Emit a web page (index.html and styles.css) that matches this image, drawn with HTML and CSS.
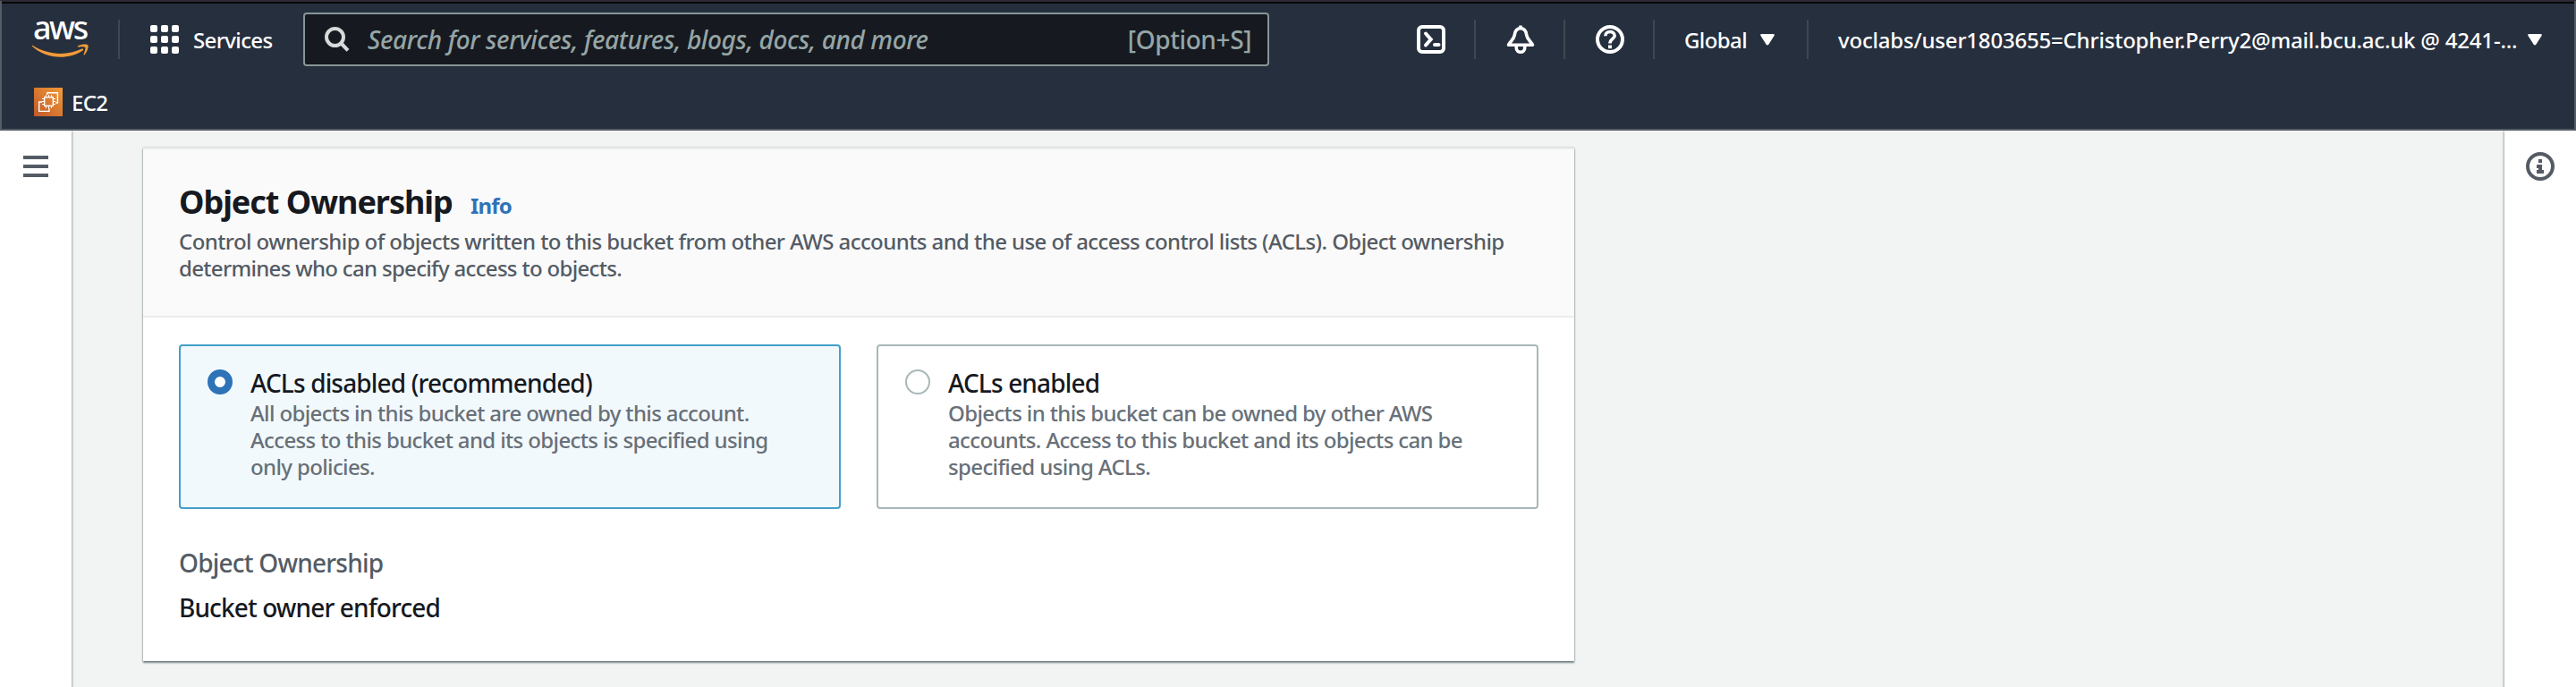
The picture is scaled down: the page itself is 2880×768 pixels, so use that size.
FILE: index.html
```html
<!DOCTYPE html>
<html lang="en">
<head>
<meta charset="utf-8">
<title>S3 bucket - Object Ownership</title>
<link rel="stylesheet" href="styles.css">
</head>
<body>
<header class="header">
  <div class="nav">
    <div class="logo">
      <span class="logo-text">aws</span>
      <svg width="64" height="16" viewBox="0 26 64 16">
        <path d="M0 27.500C18 39 39 39.500 55.500 31.500C57 31 58 32.500 56.500 33.500C40 44.500 15 43 0 28.800Z" fill="#f19b38"/>
        <path d="M51 28.500C55 26.200 61 26 62.300 27.300C63.500 29 61.500 35.500 58.500 38.300C57.800 38.800 57.200 38.500 57.500 37.700C58.500 35 60 31 59.300 30C58.300 29 54.500 29.200 51.800 29.700C50.800 29.700 50.500 29 51 28.500Z" fill="#f19b38"/>
      </svg>
    </div>
    <span class="divider"></span>
    <svg class="grid-icon" width="32" height="32" viewBox="0 0 32 32" fill="#fff">
      <rect width="8" height="8" rx="2"/><rect x="12" width="8" height="8" rx="2"/><rect x="24" width="8" height="8" rx="2"/>
      <rect y="12" width="8" height="8" rx="2"/><rect x="12" y="12" width="8" height="8" rx="2"/><rect x="24" y="12" width="8" height="8" rx="2"/>
      <rect y="24" width="8" height="8" rx="2"/><rect x="12" y="24" width="8" height="8" rx="2"/><rect x="24" y="24" width="8" height="8" rx="2"/>
    </svg>
    <span class="services">Services</span>
    <div class="search">
      <svg width="28" height="28" viewBox="0 0 28 28" fill="none" stroke="#d5dbdb" stroke-width="4">
        <circle cx="11.500" cy="11.500" r="9.500"/><path d="M18 18l8 8.300"/>
      </svg>
      <span class="placeholder">Search for services, features, blogs, docs, and more</span>
      <span class="shortcut">[Option+S]</span>
    </div>
    <div class="tools">
      <svg width="32" height="32" viewBox="0 0 32 32" fill="none" stroke="#fff" stroke-width="4">
        <rect x="2" y="2" width="28" height="28" rx="4"/>
        <path d="M10 9.500l5.700 6.500L10 22.500" stroke-linecap="round"/><path d="M20 22h4.500" stroke-linecap="round"/>
      </svg>
      <span class="divider"></span>
      <svg width="32" height="32" viewBox="0 0 32 32" fill="none" stroke="#fff" stroke-width="3.600" stroke-linejoin="round">
        <path d="M16 .5v3"/>
        <path d="M16 3.800C11.500 3.800 9.800 7 9.300 11C8.800 16 5 17.500 2.500 22.200H29.500C27 17.500 23.200 16 22.700 11C22.200 7 20.500 3.800 16 3.800Z"/>
        <path d="M11.300 23.500v2.200c0 6 9.400 6 9.400 0v-2.200"/>
      </svg>
      <span class="divider"></span>
      <svg width="32" height="32" viewBox="0 0 32 32" fill="none" stroke="#fff">
        <circle cx="16" cy="16" r="14" stroke-width="4"/>
        <path d="M10.800 12.200C10.800 6 21.200 6 21.200 12C21.200 15.500 16 15.500 16 20.500" stroke-width="3.600"/>
        <path d="M16 22.500v3.700" stroke-width="4"/>
      </svg>
      <span class="divider"></span>
    </div>
    <span class="region">Global</span>
    <svg class="caret" width="16" height="13" viewBox="0 0 16 13"><path d="M1.500 0H14.500Q16.500 0 15.500 2L9.500 11.500Q8 13.500 6.500 11.500L.5 2Q-.5 0 1.500 0Z" fill="#fff"/></svg>
    <span class="divider"></span>
    <span class="account">voclabs/user1803655=Christopher.Perry2@mail.bcu.ac.uk @ 4241-...</span>
    <svg class="caret" width="16" height="13" viewBox="0 0 16 13"><path d="M1.500 0H14.500Q16.500 0 15.500 2L9.500 11.500Q8 13.500 6.500 11.500L.5 2Q-.5 0 1.500 0Z" fill="#fff"/></svg>
  </div>
  <div class="favorites">
    <svg width="32" height="32" viewBox="0 0 32 32" fill="none" stroke="#fff">
      <defs><linearGradient id="ec2" x1="0" y1="1" x2="1" y2="0"><stop offset="0" stop-color="#c1592b"/><stop offset="1" stop-color="#f19b38"/></linearGradient></defs>
      <rect width="32" height="32" fill="url(#ec2)" stroke="none"/>
      <rect x="11.700" y="10.700" width="9.600" height="9.600" stroke-width="1.400"/>
      <path d="M13.500 8v2.500M16.500 8v2.500M19.500 8v2.500M13.500 20.500v2.500M16.500 20.500v2.500M19.500 20.500v2.500M9 12.500h2.500M9 15.500h2.500M9 18.500h2.500M21.500 12.500h2.500M21.500 15.500h2.500M21.500 18.500h2.500" stroke-width="1.100"/>
      <path d="M14.800 8V5.800H26.400V17H24.200M9 16H5.700V26.400H17V23" stroke-width="1.400"/>
    </svg>
    <span class="favorite">EC2</span>
  </div>
</header>
<div class="page">
  <aside class="side-left">
    <svg width="28" height="24" viewBox="0 0 28 24" fill="#545b64"><rect width="28" height="4"/><rect y="10" width="28" height="4"/><rect y="20" width="28" height="4"/></svg>
  </aside>
  <main class="main">
    <section class="panel">
      <div class="panel-head">
        <div class="title-row"><h2 class="title">Object Ownership</h2><a class="info">Info</a></div>
        <p class="summary">Control ownership of objects written to this bucket from other AWS accounts and the use of access control lists (ACLs). Object ownership<br><span class="summary-end">determines who can specify access to objects.</span></p>
      </div>
      <div class="panel-body">
        <div class="tiles">
          <div class="tile tile-selected">
            <span class="radio radio-checked"></span>
            <div>
              <div class="tile-title">ACLs disabled (recommended)</div>
              <p class="tile-text">All objects in this bucket are owned by this account.<br>Access to this bucket and its objects is specified using<br>only policies.</p>
            </div>
          </div>
          <div class="tile">
            <span class="radio"></span>
            <div>
              <div class="tile-title">ACLs enabled</div>
              <p class="tile-text">Objects in this bucket can be owned by other AWS<br>accounts. Access to this bucket and its objects can be<br>specified using ACLs.</p>
            </div>
          </div>
        </div>
        <div class="field-label">Object Ownership</div>
        <div class="field-value">Bucket owner enforced</div>
      </div>
    </section>
  </main>
  <aside class="side-right">
    <svg width="32" height="32" viewBox="0 0 32 32"><circle cx="16" cy="16" r="14" fill="none" stroke="#545b64" stroke-width="4"/><path d="M14 8h4v4h-4zM12 14h6v6h2v4h-8v-4h2v-2h-2z" fill="#545b64"/></svg>
  </aside>
</div>
</body>
</html>
```
FILE: styles.css
```css
* { box-sizing: border-box; }
body {
  margin: 0;
  width: 2880px;
  height: 768px;
  display: flex;
  flex-direction: column;
  overflow: hidden;
  background: #f2f3f3;
  font-family: "Noto Sans", "Open Sans", sans-serif;
  font-size: 24px;
  font-weight: 500;
  color: #16191f;
}
h2, p { margin: 0; }
svg { display: block; flex: none; }

.header {
  height: 146px;
  flex: none;
  background: #262f3e;
  border: 2px solid #545b64;
  border-top: 2px solid #2d2a35;
  color: #fff;
  box-shadow: inset 0 2px #07080a;
}
.nav {
  display: flex;
  align-items: center;
  height: 82px;
  padding: 2px 0 0 34px;
  white-space: nowrap;
}
.logo { width: 64px; height: 60px; display: flex; flex-direction: column; margin-top: -14px; }
.logo-text { height: 42px; padding-left: 1px; font-size: 36px; line-height: 47px; letter-spacing: -2.500px; }
.divider { width: 2px; height: 44px; background: #414750; flex: none; }
.nav > .logo + .divider { margin-left: 32px; }
.grid-icon { margin-left: 34px; }
.services { width: 88px; margin-left: 16px; letter-spacing: -.62px; }
.search {
  width: 1080px;
  height: 60px;
  margin-left: 35px;
  padding: 0 18px 0 22px;
  display: flex;
  align-items: center;
  flex: none;
  background: #16191f;
  border: 2px solid #879596;
  border-radius: 4px;
  color: #95a5a6;
  font-size: 28px;
}
.placeholder { margin-left: 20px; font-style: italic; letter-spacing: -.38px; }
.shortcut { margin-left: auto; letter-spacing: -.4px; }
.tools { display: flex; align-items: center; margin-left: 165px; }
.tools .divider { margin: 0 34px 0 32px; }
.region { width: 72px; letter-spacing: -.6px; }
.tools + .region { margin-left: -1px; }
.caret { margin: 0 0 0 13px; }
.caret + .divider { margin-left: 36px; }
.account { width: 758px; margin-left: 33px; letter-spacing: -.2px; }
.favorites { display: flex; align-items: center; gap: 10px; height: 60px; padding-left: 36px; letter-spacing: -.7px; }

.page { flex: 1; display: flex; justify-content: space-between; min-height: 0; }
.side-left, .side-right { width: 80px; background: #fff; flex: none; }
.side-left { padding: 28px 0 0 26px; box-shadow: 1px 1px 2px rgba(0, 28, 36, .35); }
.side-right { padding: 24px 0 0 24px; box-shadow: -1px 1px 2px rgba(0, 28, 36, .35); }
.main { flex: 1; padding: 19px 80px 0; }

.panel {
  width: 1600px;
  height: 574px;
  background: #fff;
  border-top: 2px solid #eaeded;
  box-shadow: 0 2px 2px rgba(0, 28, 36, .5), 0 0 2px rgba(0, 28, 36, .3);
}
.panel-head {
  height: 188px;
  padding: 36px 40px 0;
  background: #fafafa;
  border-bottom: 2px solid #eaeded;
}
.title-row { display: flex; align-items: baseline; height: 52px; line-height: 46px; white-space: nowrap; }
.title { width: 307px; font-size: 36px; font-weight: 700; letter-spacing: -1.030px; }
.info { margin-left: 19px; font-weight: 700; letter-spacing: -.8px; color: #2e73b8; }
.summary { line-height: 30px; letter-spacing: -.58px; color: #545b64; white-space: nowrap; }
.summary-end { letter-spacing: -.68px; }

.panel-body { padding: 30px 40px 0; }
.tiles { display: grid; grid-template-columns: 1fr 1fr; gap: 40px; }
.tile {
  display: flex;
  gap: 20px;
  height: 184px;
  padding: 23px 30px;
  border: 2px solid #aab7b8;
  border-radius: 4px;
}
.tile-selected { background: #f2f9fd; border-color: #44a0c8; }
.radio { width: 28px; height: 28px; margin-top: 3px; flex: none; border: 2px solid #aab7b8; border-radius: 50%; background: #fff; }
.radio-checked { border: 8px solid #2e73b8; }
.tile-title { height: 37px; line-height: 36px; font-size: 28px; letter-spacing: -.85px; }
.tile-text { line-height: 30px; letter-spacing: -.63px; color: #687078; white-space: nowrap; }
.field-label, .field-value { font-size: 28px; line-height: 50px; letter-spacing: -.88px; }
.field-label { margin-top: 35px; color: #545b64; letter-spacing: -.78px; }
```
